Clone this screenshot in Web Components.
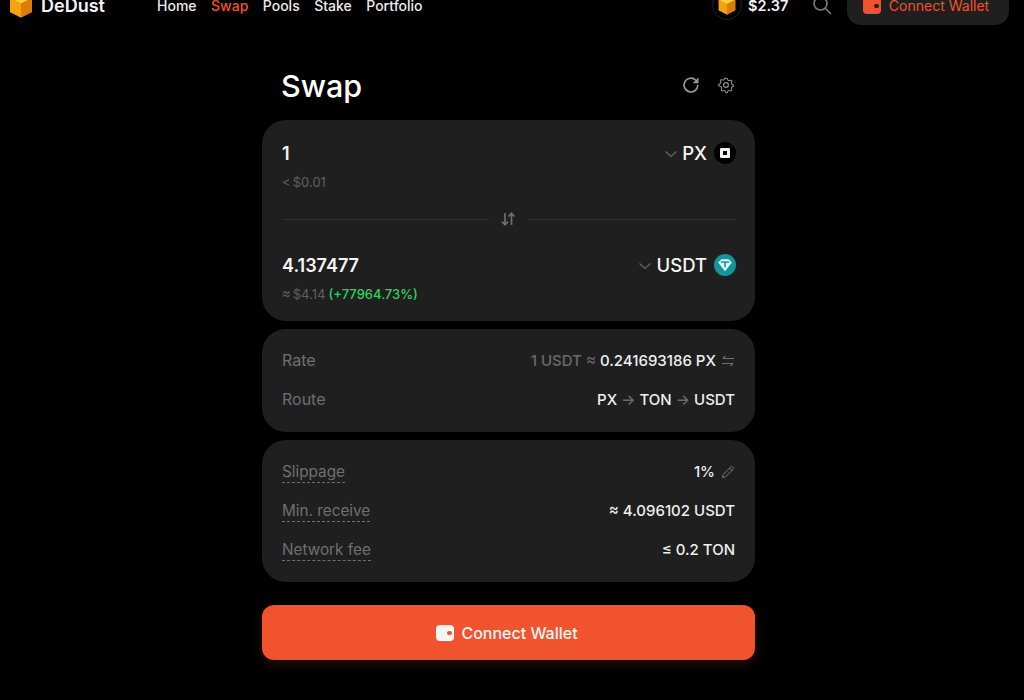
<!DOCTYPE html>
<html>
<head>
<meta charset="utf-8">
<title>DeDust Swap</title>
<style>
  html, body { margin: 0; background: #000; height: 100%; overflow: hidden; }
  body { font-family: Inter, "Liberation Sans", sans-serif; color: #f5f5f5; }
</style>
</head>
<body>
<dd-header></dd-header>
<dd-page>
  <dd-title></dd-title>
  <dd-card pad="swap">
    <dd-token amount="1" usd="&lt; $0.01" symbol="PX" icon="px"></dd-token>
    <dd-divider></dd-divider>
    <dd-token amount="4.137477" usd="≈ $4.14" gain="(+77964.73%)" symbol="USDT" icon="usdt"></dd-token>
  </dd-card>
  <dd-card>
    <dd-row label="Rate" plain><span class="dim">1 USDT ≈ </span>0.241693186 PX<dd-icon name="flip" style="margin-left:5px"></dd-icon></dd-row>
    <dd-row label="Route" plain>PX <span class="dim">→</span> TON <span class="dim">→</span> USDT</dd-row>
  </dd-card>
  <dd-card>
    <dd-row label="Slippage" dashed>1%<dd-icon name="pencil"></dd-icon></dd-row>
    <dd-row label="Min. receive" dashed>≈ 4.096102 USDT</dd-row>
    <dd-row label="Network fee" dashed>≤ 0.2 TON</dd-row>
  </dd-card>
  <dd-connect></dd-connect>
</dd-page>

<script>
const ICONS = {
  refresh: `<svg width="18" height="18" viewBox="0 0 18 18" fill="none" stroke="#999" stroke-width="1.7" stroke-linecap="round"><path d="M15.8 9.500A6.900 6.900 0 1 1 13.600 4"/><path d="M16.500 1.500v5.800h-5.800z" fill="#999" stroke="none"/></svg>`,
  gear: `<svg width="18" height="18" viewBox="0 0 24 24" fill="none" stroke="#8f8f8f" stroke-width="1.6" stroke-linejoin="round"><circle cx="12" cy="12" r="3.2"/><path d="M12 2.2l2 .1 1 2.6 1.800.8 2.600-1 1.600 1.600-.9 2.600.8 1.900 2.500 1.100v2.200l-2.500 1.100-.8 1.800.9 2.600-1.600 1.600-2.600-1-1.800.8-1 2.600h-2.200l-1.100-2.600-1.800-.8-2.600 1-1.500-1.600.9-2.600-.8-1.800L1 13.100v-2.200l2.500-1.100.8-1.900-.9-2.600L5 3.700l2.600 1 1.800-.8 1-2.600z" transform="translate(1.400 1.400) scale(.88)"/></svg>`,
  flip: `<svg width="14" height="14" viewBox="0 0 14 14" fill="none" stroke="#6f6f6f" stroke-width="1.1"><path d="M13 4.500H2M4.500 2L2 4.500"/><path d="M1 9.500h11M9.500 12L12 9.500"/></svg>`,
  pencil: `<svg width="14" height="14" viewBox="0 0 14 14" fill="none" stroke="#7a7a7a" stroke-width="1" stroke-linejoin="round"><path d="M1.500 12.500l.7-3L9.800 1.900a1.200 1.200 0 0 1 1.700 0l.7.7a1.200 1.200 0 0 1 0 1.700L4.500 11.800z"/><path d="M8.600 3.100l2.400 2.400"/></svg>`,
  swap: `<svg width="16" height="16" viewBox="0 0 16 16" fill="none" stroke="#6e6e6e" stroke-width="1.7"><path d="M5 2v11.500M1.800 10.500L5 13.700l3.200-3.200"/><path d="M11.500 14V2.500M8.500 5.500l3-3.200 3 3.200"/></svg>`,
  chevron: `<svg width="14" height="8" viewBox="0 0 14 8" fill="none" stroke="#666" stroke-width="1.2"><path d="M1.500 1.500L7 6.500l5.500-5"/></svg>`,
  search: `<svg width="20" height="20" viewBox="0 0 20 20" fill="none" stroke="#7d7d7d" stroke-width="1.6" stroke-linecap="round"><circle cx="8.500" cy="8.500" r="6.500"/><path d="M13.500 13.500l5 5"/></svg>`,
  px: `<svg width="22" height="22" viewBox="0 0 22 22"><circle cx="11" cy="11" r="11" fill="#000"/><rect x="6" y="6" width="10" height="10" rx="1.200" fill="#f2f2f2"/><rect x="9" y="9" width="4" height="4" fill="#000"/></svg>`,
  usdt: `<svg width="22" height="22" viewBox="0 0 22 22"><circle cx="11" cy="11" r="11" fill="#12969c"/><path d="M7.500 5.200h7l3.300 3.200L11 17.200 4.200 8.400z" fill="#e8f6f6"/><path d="M6.800 7.300h8.400v1.500h-3.400v4.400h-1.600V8.800H6.800z" fill="#12969c"/></svg>`,
  cube: `<svg width="24" height="26" viewBox="0 0 24 26"><path d="M12 1l11 5v14l-11 5.500L1 20V6z" fill="#f59f0a"/><path d="M12 1l11 5-11 5.500L1 6z" fill="#fbd23c"/><path d="M12 11.500V25.500L1 20V6z" fill="#f5a30c"/><path d="M12 11.500V25.500l11-5.500V6z" fill="#dd7d05"/></svg>`,
  wallet: `<svg width="18" height="16" viewBox="0 0 18 16"><rect width="18" height="16" rx="4" fill="currentColor"/><rect x="11" y="6" width="5" height="4" rx="2" fill="var(--hole)"/></svg>`
};

// shared base for the little elements, each one gets its own css + html
class Base extends HTMLElement {
  render(css, html) {
    if (!this.shadowRoot) this.attachShadow({ mode: "open" });
    this.shadowRoot.innerHTML = `<style>${css}</style>${html}`;
  }
}

class DdIcon extends Base {
  connectedCallback() {
    this.render(`:host{display:inline-flex;margin-left:6px}`, ICONS[this.getAttribute("name")]);
  }
}

class DdHeader extends Base {
  connectedCallback() {
    this.render(`
      :host { display:flex; align-items:center; height:38px; margin-top:-14px; padding:0 15px 0 9px; }
      .logo { display:flex; align-items:center; gap:8px; font-size:18px; font-weight:600; width:148px; }
      nav { display:flex; gap:14.5px; font-size:14px; font-weight:500; color:#ececec; }
      nav .on { color:#f0532d; }
      .right { margin-left:auto; display:flex; align-items:center; }
      .coin { width:30px; height:30px; border:1px solid #222; border-radius:50%; box-sizing:border-box;
              display:flex; align-items:center; justify-content:center; margin-right:6px; }
      .bal { font-size:14.5px; font-weight:600; width:64px; }
      .search { display:flex; margin-right:15px; }
      .btn { --hole:#1f1f1f; width:158px; padding-right:4px; height:39px; margin-top:1px; background:#1f1f1f; border-radius:14px; color:#f0532d;
             display:flex; align-items:center; justify-content:center; gap:8px; font-size:14px; font-weight:400; }
    `, `
      <div class="logo">${ICONS.cube}<span>DeDust</span></div>
      <nav><span>Home</span><span class="on">Swap</span><span>Pools</span><span>Stake</span><span>Portfolio</span></nav>
      <div class="right">
        <div class="coin">${ICONS.cube.replace('width="24" height="26"', 'width="18" height="20"')}</div>
        <div class="bal">$2.37</div>
        <div class="search">${ICONS.search}</div>
        <div class="btn">${ICONS.wallet}<span>Connect Wallet</span></div>
      </div>
    `);
  }
}

class DdPage extends Base {
  connectedCallback() {
    this.render(`
      :host { display:flex; flex-direction:column; gap:8px; width:493px; margin:0 auto; padding-right:7px; }
    `, `<slot></slot>`);
  }
}

class DdTitle extends Base {
  connectedCallback() {
    this.render(`
      :host { display:flex; align-items:center; height:40px; margin-top:41px; margin-bottom:7px; padding:0 20px 0 19px; }
      h1 { margin:0; font-size:30.5px; font-weight:500; color:#fff; flex:1; }
      .icons { display:flex; gap:17px; }
      .icons > * { display:flex; }
    `, `<h1>Swap</h1><div class="icons"><span>${ICONS.refresh}</span><span>${ICONS.gear}</span></div>`);
  }
}

class DdCard extends Base {
  connectedCallback() {
    const swap = this.getAttribute("pad") === "swap";
    this.render(`
      :host { display:flex; flex-direction:column; background:#1f1f1f; border-radius:24px;
              padding:${swap ? "21px 20px 18px" : "12px 20px 13px"}; }
    `, `<slot></slot>`);
  }
}

class DdToken extends Base {
  connectedCallback() {
    const a = n => this.getAttribute(n);
    this.render(`
      :host { display:block; }
      .top { display:flex; align-items:center; justify-content:space-between; height:24px; }
      .amount { font-size:18px; font-weight:600; color:#f5f5f5; }
      .pick { display:flex; align-items:center; font-size:18.5px; font-weight:500; color:#f5f5f5; margin-right:-1px; }
      .pick .chev { display:flex; margin-right:4px; margin-top:2px; }
      .pick .ico { display:flex; margin-left:7px; }
      .sub { margin-top:8px; font-size:13px; line-height:18px; color:#5f5f5f; word-spacing:-1.5px; }
      .gain { color:#2fd164; font-weight:500; word-spacing:0; margin-left:1px; }
    `, `
      <div class="top">
        <div class="amount">${a("amount")}</div>
        <div class="pick"><span class="chev">${ICONS.chevron}</span>${a("symbol")}<span class="ico">${ICONS[a("icon")]}</span></div>
      </div>
      <div class="sub">${a("usd").replace("<", "&lt;")} ${a("gain") ? `<span class="gain">${a("gain")}</span>` : ""}</div>
    `);
  }
}

class DdDivider extends Base {
  connectedCallback() {
    this.render(`
      :host { display:flex; align-items:center; gap:12px; height:22px; margin:17px 0 23px; }
      i { flex:1; height:1px; background:#303030; }
      i:first-child { margin-right:-1px; }
      i:last-child { margin-left:-1px; }
      span { display:flex; margin-left:-1px; margin-right:1px; }
    `, `<i></i><span>${ICONS.swap}</span><i></i>`);
  }
}

class DdRow extends Base {
  connectedCallback() {
    const dashed = this.hasAttribute("dashed");
    // light dom spans need their colour from here
    this.querySelectorAll(".dim").forEach(s => s.style.color = "#6a6a6a");
    this.render(`
      :host { display:flex; align-items:center; justify-content:space-between; height:39px; font-size:15px; font-weight:500; color:#f0f0f0; }
      .label { color:#6f6f6f; font-weight:400; font-size:${dashed ? "15.3px" : "16px"}; ${dashed ? "border-bottom:1px dashed #6f6f6f; padding-bottom:1px; margin-top:2px;" : "margin-top:-2px;"} }
      .val { display:flex; align-items:center; white-space:pre; }
    `, `<span class="label">${this.getAttribute("label")}</span><span class="val"><slot></slot></span>`);
  }
}

class DdConnect extends Base {
  connectedCallback() {
    this.render(`
      :host { --hole:#f0532d; display:flex; align-items:center; justify-content:center; gap:7px; height:55px; margin-top:15px; padding-right:3px;
              background:#f0532d; border-radius:12px; color:#f5f5f5; font-size:16px; font-weight:500; box-shadow:0 4px 12px rgba(240,83,45,.18); }
    `, `${ICONS.wallet}<span>Connect Wallet</span>`);
  }
}

customElements.define("dd-icon", DdIcon);
customElements.define("dd-header", DdHeader);
customElements.define("dd-page", DdPage);
customElements.define("dd-title", DdTitle);
customElements.define("dd-card", DdCard);
customElements.define("dd-token", DdToken);
customElements.define("dd-divider", DdDivider);
customElements.define("dd-row", DdRow);
customElements.define("dd-connect", DdConnect);
</script>
</body>
</html>
